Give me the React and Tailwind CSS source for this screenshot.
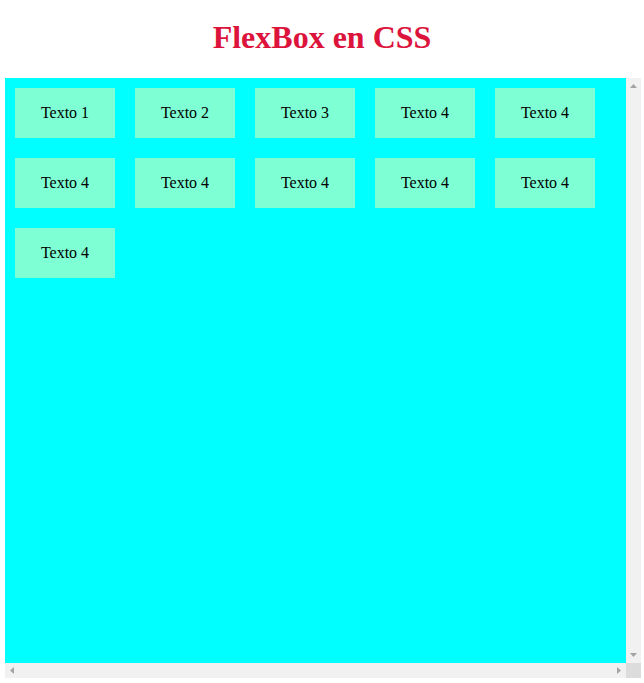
import React from "react";

const items = [
  "Texto 1",
  "Texto 2",
  "Texto 3",
  "Texto 4",
  "Texto 4",
  "Texto 4",
  "Texto 4",
  "Texto 4",
  "Texto 4",
  "Texto 4",
  "Texto 4",
];

// little scrollbar arrow triangle
const Arrow = ({ dir }) => {
  const pts = {
    up: "0,4 3.5,0 7,4",
    down: "0,0 7,0 3.5,4",
    left: "4,0 4,7 0,3.5",
    right: "0,0 0,7 4,3.5",
  };
  const horiz = dir === "left" || dir === "right";
  return (
    <svg
      width={horiz ? 4 : 7}
      height={horiz ? 7 : 4}
      viewBox={horiz ? "0 0 4 7" : "0 0 7 4"}
    >
      <polygon points={pts[dir]} fill="#a3a3a3" />
    </svg>
  );
};

const App = () => {
  return (
    <div className="min-h-[683px] bg-white font-['Liberation_Serif',serif]">
      <h1 className="mt-[19px] mb-[23px] text-center text-[32px] leading-[36px] font-bold text-[#dc143c]">
        FlexBox en CSS
      </h1>
      <div className="ml-[5px] grid w-[636px] h-[600px] grid-cols-[621px_15px] grid-rows-[585px_15px]">
        {/* content */}
        <div className="overflow-hidden bg-[#00ffff]">
          <div className="flex flex-wrap">
            {items.map((t, i) => (
              <div
                key={i}
                className="m-[10px] flex h-[50px] w-[100px] items-center justify-center bg-[#7fffd4] text-base text-black"
              >
                {t}
              </div>
            ))}
          </div>
        </div>
        {/* vertical scrollbar */}
        <div className="flex flex-col items-center justify-between bg-[#f1f1f1] py-[6px]">
          <Arrow dir="up" />
          <Arrow dir="down" />
        </div>
        {/* horizontal scrollbar */}
        <div className="flex items-center justify-between bg-[#f1f1f1] px-[5px]">
          <Arrow dir="left" />
          <Arrow dir="right" />
        </div>
        <div className="bg-[#dcdcdc]" />
      </div>
    </div>
  );
};

export default App;
